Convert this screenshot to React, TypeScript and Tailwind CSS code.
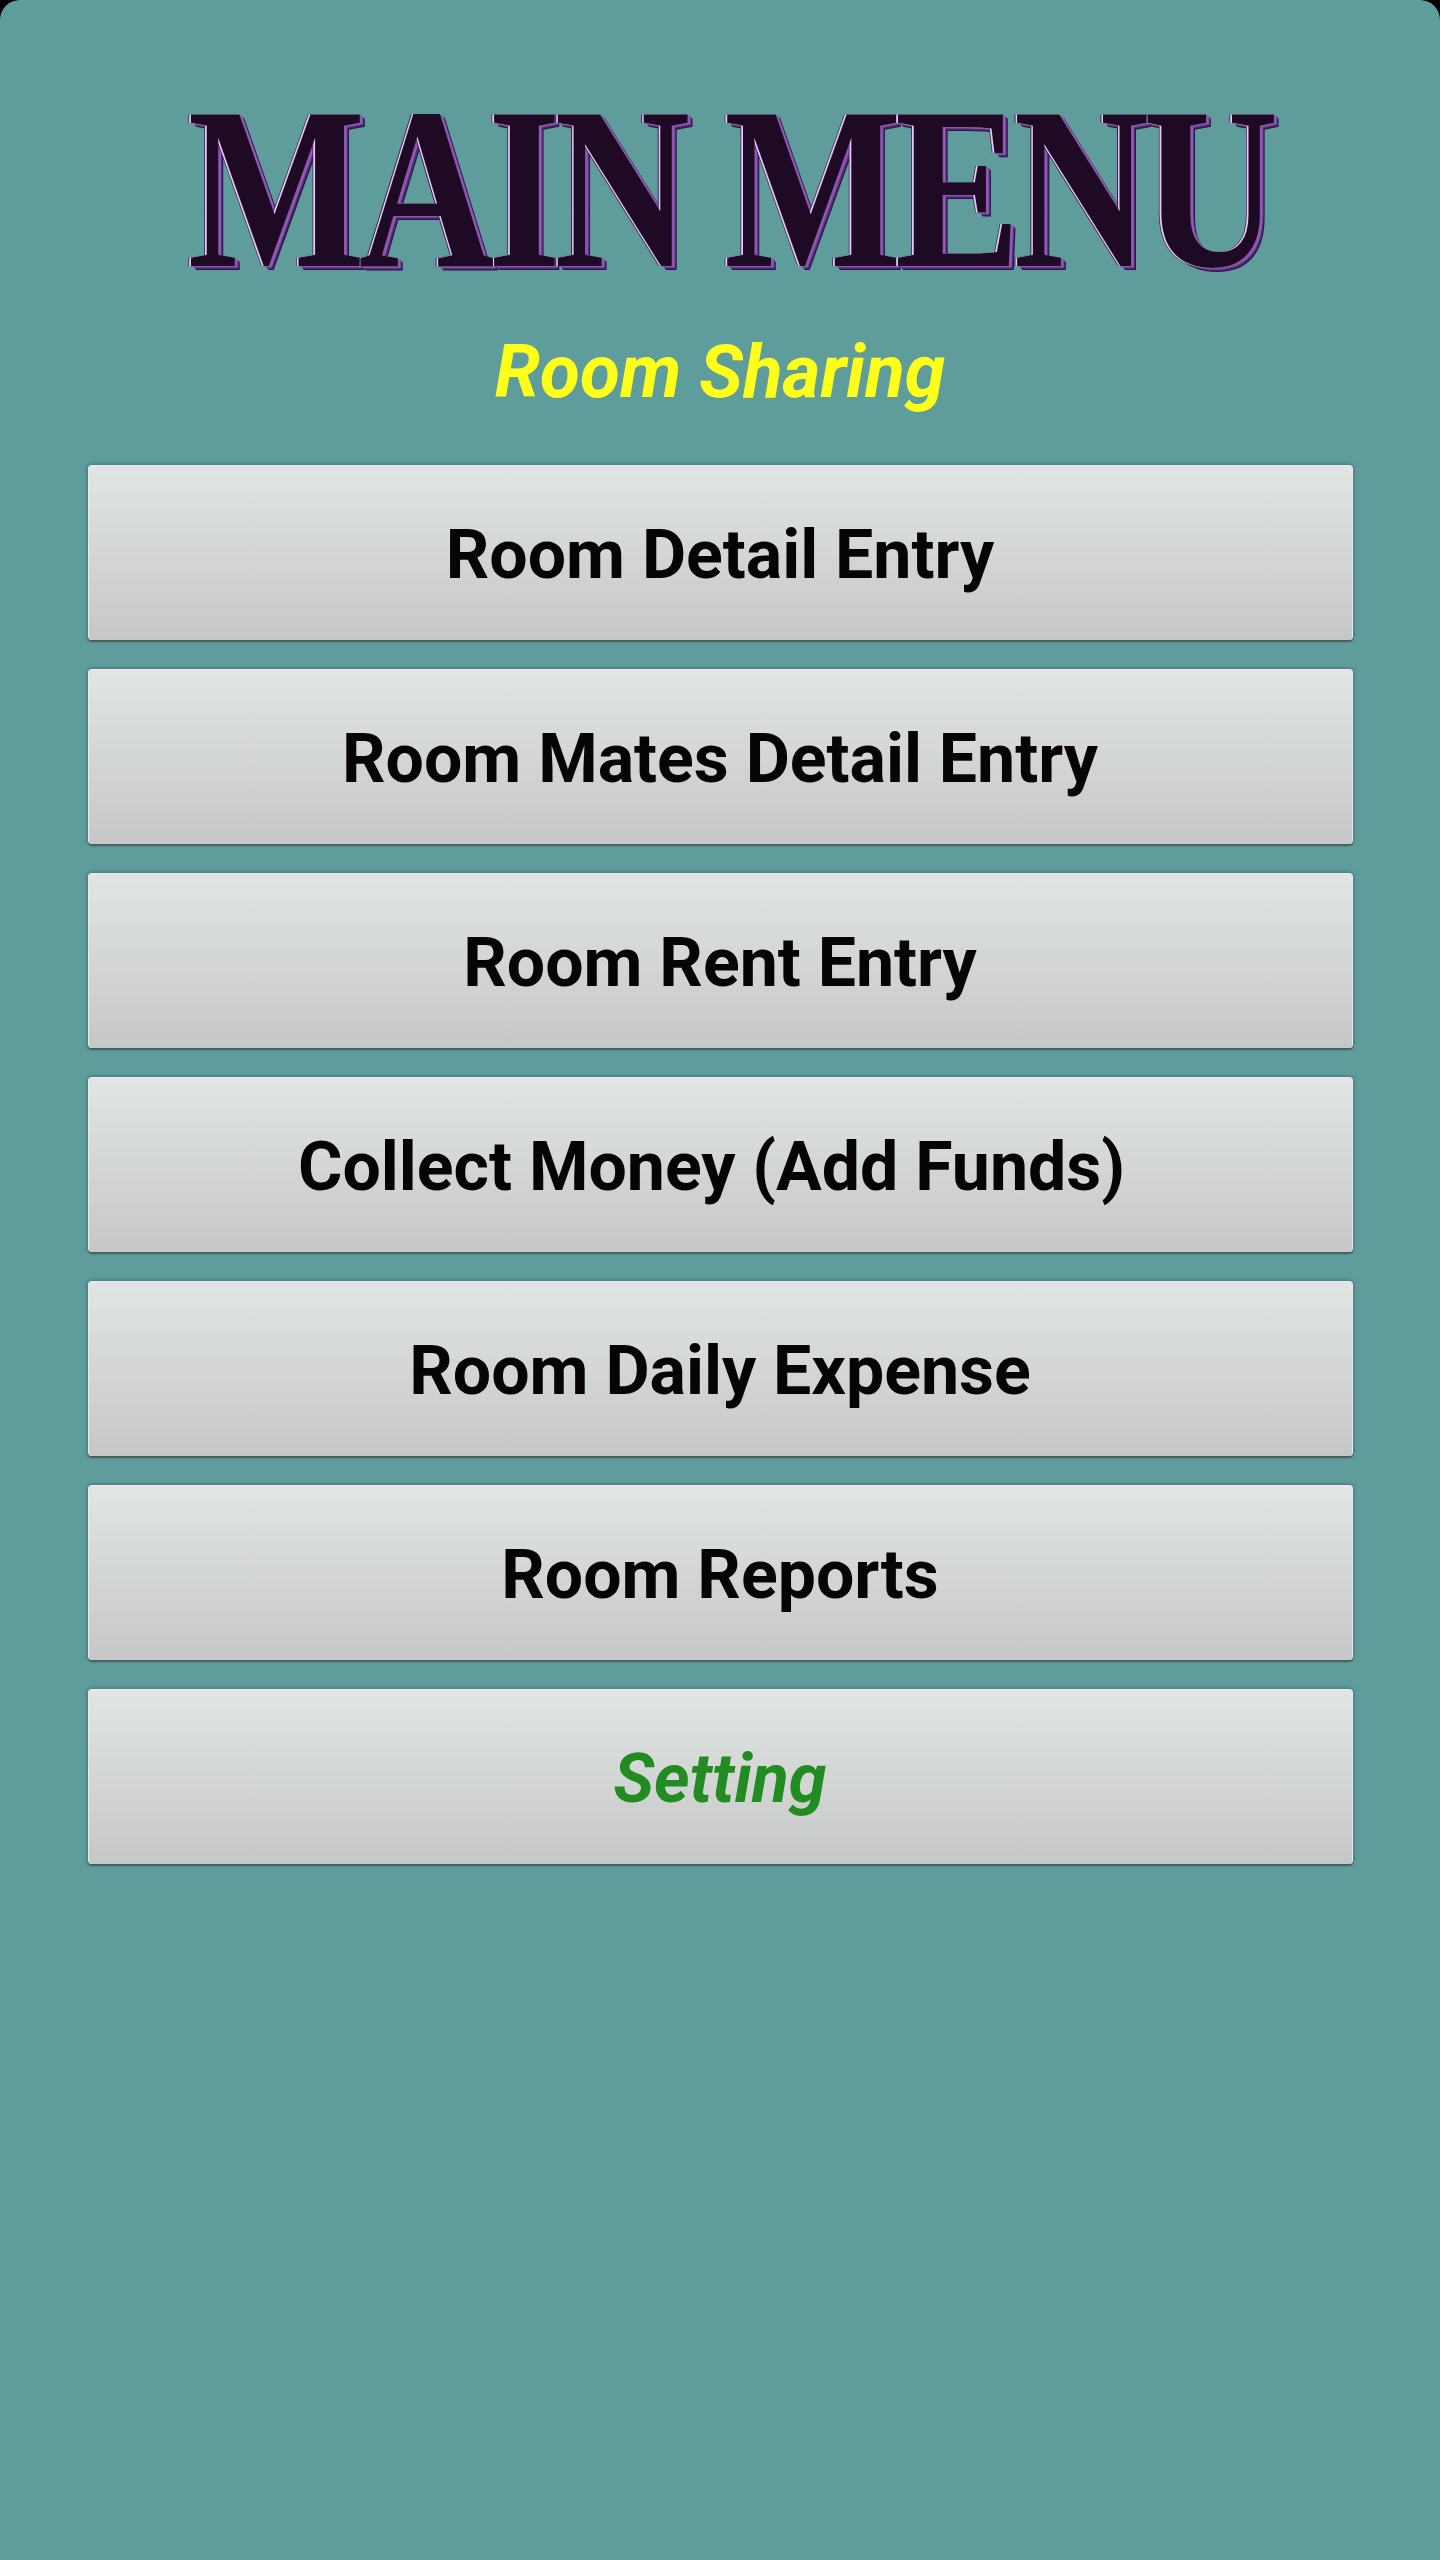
const items = [
  { label: "Room Detail Entry" },
  { label: "Room Mates Detail Entry" },
  { label: "Room Rent Entry" },
  { label: "Collect Money (Add Funds) " },
  { label: "Room Daily Expense" },
  { label: "Room Reports" },
  { label: "Setting", setting: true },
];

const titleShadow =
  "-2px 0 0 #e8c8f4, -3px 0 0 #3a1a50, 2px 1px 0 #8a55ac, 3px 1px 0 #9a64bc, 4px 2px 0 #6a3a8c, 5px 3px 0 #4a2a72, 6px 4px 0 #2a1442";

export default function App() {
  return (
    <div className="h-[2560px] w-[1440px] overflow-hidden bg-black">
      <div
        className="flex h-full flex-col items-center rounded-t-[20px] bg-[#5f9c9c]"
        style={{ fontFamily: "Roboto, sans-serif" }}
      >
        <h1
          className="mt-[84px] h-[210px] w-full scale-x-[0.817] whitespace-pre pl-[24px] text-center text-[230px] font-bold leading-[210px] tracking-[-8px] text-[#1e0a24]"
          style={{ fontFamily: "'Liberation Serif', serif", textShadow: titleShadow }}
        >
          MAIN MENU
        </h1>
        <p className="mt-[36px] h-[84px] text-[73px] font-bold italic leading-[84px] text-[#ffff1a]">
          Room Sharing
        </p>
        <div className="mt-[51px] flex w-[1265px] flex-col gap-[29px]">
          {items.map((item) => (
            <button
              key={item.label}
              className={`flex h-[175px] items-center justify-center whitespace-pre rounded-[4px] border-t border-l border-r border-[#e8ecea] bg-gradient-to-b from-[#e1e5e4] to-[#c5c8c7] pt-[4px] text-[68px] font-bold shadow-[0_2px_1px_#46615f,0_0_4px_#3a6060] ${
                item.setting ? "italic text-[#228b22]" : "text-[#050505]"
              }`}
            >
              {item.label}
            </button>
          ))}
        </div>
      </div>
    </div>
  );
}
